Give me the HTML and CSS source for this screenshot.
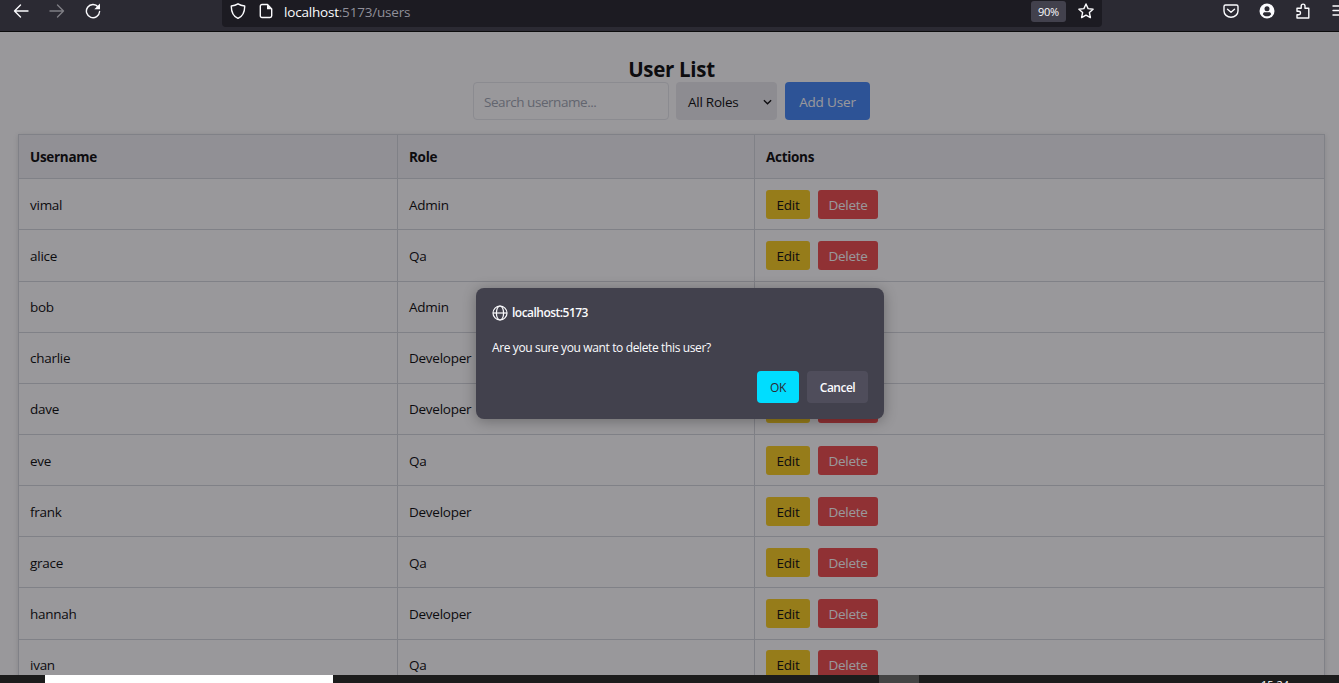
FILE: index.html
```html
<!DOCTYPE html>
<html lang="en">
<head>
<meta charset="utf-8">
<title>User List</title>
<link rel="stylesheet" href="styles.css">
</head>
<body>
<header class="toolbar">
  <nav class="nav">
    <svg class="icon" viewBox="0 0 16 16"><path d="M15 8H1.5M7.5 2l-6 6 6 6"/></svg>
    <svg class="icon dim" viewBox="0 0 16 16"><path d="M1 8h13.500M8.500 2l6 6-6 6"/></svg>
    <svg class="icon" viewBox="0 0 16 16"><path d="M13.200 4A6.600 6.600 0 1 0 14.600 8.500"/><path class="solid" d="M15 .5v5.700H9.300z"/></svg>
  </nav>
  <div class="urlbar">
    <svg class="icon" viewBox="0 0 16 16"><path d="M8 .8c2 1.300 4 1.900 6.700 2.200C14.800 9 13 13 8 15.400 3 13 1.200 9 1.300 3 4 2.700 6 2.100 8 .8z"/></svg>
    <svg class="icon page-icon" viewBox="0 0 16 16"><path d="M9.500 1.500H4A1.700 1.700 0 0 0 2.300 3.200v9.600A1.700 1.700 0 0 0 4 14.500h8a1.700 1.700 0 0 0 1.700-1.700V6z"/><path class="solid" d="M9 1.500V6.300h4.700z"/></svg>
    <span class="address"><b>localhost</b>:5173/users</span>
    <span class="zoom">90%</span>
    <svg class="icon" viewBox="0 0 16 16"><path d="M8 1l2.100 4.600 5 .6-3.700 3.400 1 5L8 12.100l-4.400 2.500 1-5L.9 6.200l5-.6z"/></svg>
  </div>
  <div class="tools">
    <svg class="icon" viewBox="0 0 16 16"><path d="M2.500 2h11A1.500 1.500 0 0 1 15 3.500V8A7 6.200 0 0 1 1 8V3.500A1.500 1.500 0 0 1 2.500 2z"/><path d="M4.500 6.200L8 9.300l3.500-3.100"/></svg>
    <svg class="icon" viewBox="0 0 16 16"><circle class="solid" cx="8" cy="8" r="7.500"/><circle class="hole" cx="8" cy="5.800" r="2.500"/><path class="hole" d="M3.800 11.300c.3-1.500 1-2.100 2-2.100h4.400c1 0 1.700.6 2 2.100C11 13 9.500 13.300 8 13.300s-3-.3-4.200-2z"/></svg>
    <svg class="icon" viewBox="0 0 16 16"><path d="M2 15h11.800V5.200H10V3a1.900 1.900 0 0 0-3.800 0v2.200H2v3h1.800a1.700 1.700 0 0 1 0 3.500H2z"/></svg>
    <svg class="icon" viewBox="0 0 16 16"><path d="M2 3h14M2 7.500h14M2 12h14"/></svg>
  </div>
</header>

<main class="page">
  <h1>User List</h1>
  <div class="controls">
    <input class="search" type="text" placeholder="Search username...">
    <div class="select"><span>All Roles</span><svg viewBox="0 0 10 6"><path d="M1 1l4 4 4-4"/></svg></div>
    <button class="add">Add User</button>
  </div>
  <div class="table">
    <div class="row head"><div>Username</div><div>Role</div><div>Actions</div></div>
    <div class="row"><div>vimal</div><div>Admin</div><div><button class="edit">Edit</button><button class="delete">Delete</button></div></div>
    <div class="row tall"><div>alice</div><div>Qa</div><div><button class="edit">Edit</button><button class="delete">Delete</button></div></div>
    <div class="row raised"><div>bob</div><div>Admin</div><div><button class="edit">Edit</button><button class="delete">Delete</button></div></div>
    <div class="row raised"><div>charlie</div><div>Developer</div><div><button class="edit">Edit</button><button class="delete">Delete</button></div></div>
    <div class="row raised"><div>dave</div><div>Developer</div><div><button class="edit">Edit</button><button class="delete">Delete</button></div></div>
    <div class="row"><div>eve</div><div>Qa</div><div><button class="edit">Edit</button><button class="delete">Delete</button></div></div>
    <div class="row"><div>frank</div><div>Developer</div><div><button class="edit">Edit</button><button class="delete">Delete</button></div></div>
    <div class="row"><div>grace</div><div>Qa</div><div><button class="edit">Edit</button><button class="delete">Delete</button></div></div>
    <div class="row tall"><div>hannah</div><div>Developer</div><div><button class="edit">Edit</button><button class="delete">Delete</button></div></div>
    <div class="row raised"><div>ivan</div><div>Qa</div><div><button class="edit">Edit</button><button class="delete">Delete</button></div></div>
  </div>
  <div class="backdrop">
    <section class="dialog" role="dialog">
      <div class="origin"><svg viewBox="0 0 16 16"><circle cx="8" cy="8" r="7"/><ellipse cx="8" cy="8" rx="3.600" ry="7"/><path d="M1 8h14"/></svg><span>localhost:5173</span></div>
      <p>Are you sure you want to delete this user?</p>
      <div class="buttons"><button class="ok">OK</button><button class="cancel">Cancel</button></div>
    </section>
  </div>
</main>

<footer class="taskbar"><span class="task-search"></span><span class="task-active"></span><span class="clock">15:24</span></footer>
</body>
</html>
```
FILE: styles.css
```css
* { box-sizing: border-box; }
body {
  margin: 0;
  height: 683px;
  overflow: hidden;
  display: flex;
  flex-direction: column;
  font-family: "Open Sans", "Noto Sans", sans-serif;
  font-size: 13.5px;
  letter-spacing: -.26px;
  color: #000;
}
button, input { font: inherit; border: 0; padding: 0; letter-spacing: inherit; }

.toolbar {
  height: 32px;
  flex: none;
  display: flex;
  overflow: hidden;
  background: #2b2a33;
  border-bottom: 1px solid #0c0c0d;
  color: #fbfbfe;
}
.icon { width: 16px; height: 16px; flex: none; fill: none; stroke: #fbfbfe; stroke-width: 1.4; stroke-linejoin: round; stroke-linecap: round; }
.icon .solid { fill: #fbfbfe; stroke: none; }
.icon .hole { fill: #2b2a33; stroke: none; }
.icon.dim { opacity: .4; }
.nav { width: 222px; height: 22px; flex: none; display: flex; align-items: center; gap: 20px; padding-left: 13px; }
.urlbar {
  width: 880px;
  height: 27px;
  flex: none;
  padding: 0 8px 5px;
  display: flex;
  align-items: center;
  background: #1c1b22;
  border-radius: 0 0 4px 4px;
}
.page-icon { margin-left: 12px; }
.address { margin-left: 10px; padding-top: 2px; flex: 1; color: #8f8f99; letter-spacing: -.2px; }
.address b { font-weight: 400; color: #fbfbfe; }
.zoom {
  width: 35px;
  height: 21px;
  margin: 1px 12px 0 0;
  display: grid;
  place-items: center;
  background: #42414d;
  border-radius: 3px;
  font-size: 11px;
  letter-spacing: -.3px;
}
.tools { height: 22px; flex: none; display: flex; align-items: center; gap: 20px; padding-left: 121px; }

.page { position: relative; height: 643px; flex: none; padding: 23px 14px 0 18px; background: #fff; overflow: hidden; }
h1 { margin: 0; height: 27px; line-height: 28px; text-align: center; font-size: 20.5px; font-weight: 700; letter-spacing: -.3px; }
.controls { height: 38px; display: flex; justify-content: center; margin-bottom: 14px; }
.search { width: 196px; padding: 2px 10px 0; border: 1px solid #e5e7eb; border-radius: 4px; background: #fff; letter-spacing: -.45px; }
.search::placeholder { color: #9ca3af; opacity: 1; }
.select { width: 101px; margin: 0 8px 0 7px; padding: 2px 5px 0 12px; display: flex; align-items: center; justify-content: space-between; background: #e9e9ed; border-radius: 4px; }
.select svg { width: 9px; height: 6px; fill: none; stroke: #000; stroke-width: 1.5; }
.add { width: 85px; padding-top: 2px; border-radius: 4px; background: #3b82f6; color: #fff; letter-spacing: -.15px; }

.table { width: 1307px; border-left: 1px solid #d1d5db; border-top: 1px solid #d1d5db; box-shadow: 0 1px 5px rgba(0, 0, 0, .14); }
.row { display: grid; grid-template-columns: 379px 357px 570px; height: 51px; line-height: 30px; }
.row > div { display: flex; align-items: flex-start; padding: 11px 11px 0; border-right: 1px solid #d1d5db; border-bottom: 1px solid #d1d5db; }
.row > div:last-child { gap: 8px; }
.row.tall { height: 52px; }
.row.raised > div { padding-top: 10px; }
.row button { height: 29px; border-radius: 3px; }
.row.head { height: 44px; background: #f0f0f4; font-weight: 700; letter-spacing: -.3px; }
.row.head > div { padding-top: 7px; }
.edit { width: 44px; background: #facc15; }
.delete { width: 60px; background: #ef4444; color: #fff; }

.backdrop { position: absolute; inset: 0; background: rgba(28, 27, 34, .45); }
.dialog {
  position: absolute;
  left: 476px;
  top: 256px;
  width: 408px;
  height: 131px;
  padding: 16px;
  background: #42414d;
  border-radius: 8px;
  box-shadow: 0 2px 14px rgba(0, 0, 0, .3);
  color: #fbfbfe;
  font-size: 12px;
}
.origin { height: 17px; display: flex; align-items: center; gap: 4px; font-weight: 600; letter-spacing: -.52px; }
.origin svg { width: 16px; height: 16px; fill: none; stroke: #fbfbfe; stroke-width: 1.2; }
.dialog p { margin: 18px 0 15px; height: 17px; line-height: 17px; letter-spacing: -.37px; }
.buttons { display: flex; justify-content: flex-end; gap: 8px; }
.buttons button { height: 32px; border-radius: 4px; }
.ok { width: 42px; background: #00ddff; color: #2b2a33; }
.cancel { width: 61px; background: #4f4d5b; color: #fbfbfe; font-weight: 600; letter-spacing: -.5px; }

.taskbar { height: 8px; flex: none; display: flex; background: #1c1c1c; overflow: hidden; }
.task-search { width: 288px; margin-left: 45px; background: #fff; }
.task-active { width: 40px; margin-left: 546px; background: #444; }
.clock { margin-left: 342px; padding-top: 3px; font-size: 11px; line-height: 13px; letter-spacing: 0; color: #fff; }
```
